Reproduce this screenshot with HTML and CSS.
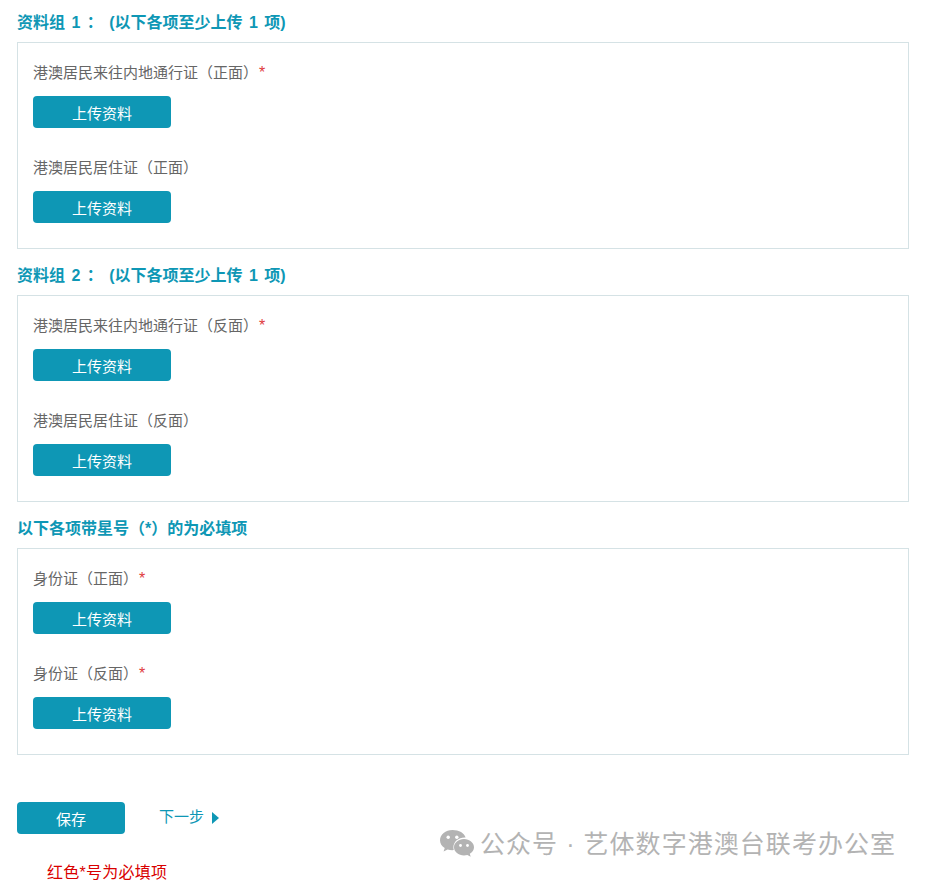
FILE: index.html
```html
<!DOCTYPE html>
<html lang="zh-CN">
<head>
<meta charset="utf-8">
<title>上传资料</title>
<link rel="stylesheet" href="styles.css">
</head>
<body>
<main class="page">
  <section class="group">
    <h2 class="group-title">资料组 1 ： (以下各项至少上传 1 项)</h2>
    <div class="panel">
      <div class="field"><div class="label">港澳居民来往内地通行证（正面）<span class="req">*</span></div><button class="upload">上传资料</button></div>
      <div class="field"><div class="label">港澳居民居住证（正面）</div><button class="upload">上传资料</button></div>
    </div>
  </section>
  <section class="group">
    <h2 class="group-title">资料组 2 ： (以下各项至少上传 1 项)</h2>
    <div class="panel">
      <div class="field"><div class="label">港澳居民来往内地通行证（反面）<span class="req">*</span></div><button class="upload">上传资料</button></div>
      <div class="field"><div class="label">港澳居民居住证（反面）</div><button class="upload">上传资料</button></div>
    </div>
  </section>
  <section class="group">
    <h2 class="group-title">以下各项带星号（*）的为必填项</h2>
    <div class="panel">
      <div class="field"><div class="label">身份证（正面）<span class="req">*</span></div><button class="upload">上传资料</button></div>
      <div class="field"><div class="label">身份证（反面）<span class="req">*</span></div><button class="upload">上传资料</button></div>
    </div>
  </section>
  <div class="actions">
    <button class="save">保存</button>
    <a class="next">下一步<svg class="next-arrow" width="7" height="12" viewBox="0 0 7 12"><path d="M0 0L7 6L0 12Z" fill="#0e97b5"/></svg></a>
  </div>
  <p class="note">红色*号为必填项</p>
</main>
<div class="watermark">
  <svg class="wm-icon" width="36" height="30" viewBox="0 0 36 30">
    <path d="M13.5 1C6.6 1 1 5.600 1 11.200c0 3.200 1.800 6 4.700 7.900L4.600 22.600l4-2.100c1.500.4 3.100.7 4.900.7.4 0 .9 0 1.300-.1-.3-.9-.4-1.900-.4-2.900 0-5.400 5-9.700 11.200-9.700.3 0 .7 0 1 0C25.400 4.100 20 1 13.500 1z" fill="#b3b3b3"/>
    <path d="M35 18.200c0-4.500-4.500-8.200-10-8.200s-10 3.700-10 8.200 4.500 8.200 10 8.200c1.200 0 2.300-.2 3.400-.5l3.300 1.800-.9-3C33.300 23.200 35 20.900 35 18.200z" fill="#b3b3b3"/>
    <circle cx="9.200" cy="8.200" r="1.700" fill="#fff"/>
    <circle cx="17.800" cy="8.200" r="1.700" fill="#fff"/>
    <circle cx="21.500" cy="16.500" r="1.400" fill="#fff"/>
    <circle cx="28.500" cy="16.500" r="1.400" fill="#fff"/>
  </svg>
  <span class="wm-text">公众号 · 艺体数字港澳台联考办公室</span>
</div>
</body>
</html>
```

FILE: styles.css
```css
* { box-sizing: border-box; }
html, body { margin: 0; padding: 0; }
body {
  background: #fff;
  font-family: "Liberation Sans", "Noto Sans CJK SC", sans-serif;
  height: 881px;
  overflow: hidden;
  position: relative;
}
.page { padding: 12px 16px 0 17px; }
.group { margin-bottom: 16px; }
.group-title {
  margin: 0;
  height: 30px;
  line-height: 22px;
  font-size: 16px;
  font-weight: bold;
  color: #0e97b5;
  white-space: pre;
  word-spacing: 2px;
}
.panel {
  border: 1px solid #d5e2e5;
  height: 207px;
  padding: 15px;
  display: flex;
  flex-direction: column;
  gap: 25px;
}
.field { display: flex; flex-direction: column; align-items: flex-start; gap: 10px; }
.label {
  height: 28px;
  line-height: 30px;
  font-size: 15px;
  color: #666;
}
.req { color: #e03c3c; font-size: 16px; margin-left: 1px; }
.upload, .save {
  border: 0;
  border-radius: 4px;
  background: #0e97b5;
  color: #fff;
  font: 15px/32px "Liberation Sans", "Noto Sans CJK SC", sans-serif;
  height: 32px;
  padding: 2px 0 0;
}
.upload { width: 138px; }
.actions { display: flex; align-items: flex-start; margin-top: 47px; }
.save { width: 108px; }
.next {
  margin-left: 34px;
  margin-top: 5px;
  font-size: 15px;
  line-height: 20px;
  color: #0e97b5;
  display: flex;
  align-items: center;
}
.next-arrow { margin-left: 8px; margin-top: 1px; }
.note {
  margin: 29px 0 0 30px;
  font-size: 16px;
  letter-spacing: 0.25px;
  line-height: 20px;
  color: #d90000;
}
.watermark {
  position: absolute;
  left: 439px;
  top: 829px;
  display: flex;
  align-items: center;
  gap: 5px;
}
.wm-text {
  font-size: 25px;
  letter-spacing: 1.05px;
  line-height: 30px;
  color: #b3b3b3;
  white-space: nowrap;
}
```
